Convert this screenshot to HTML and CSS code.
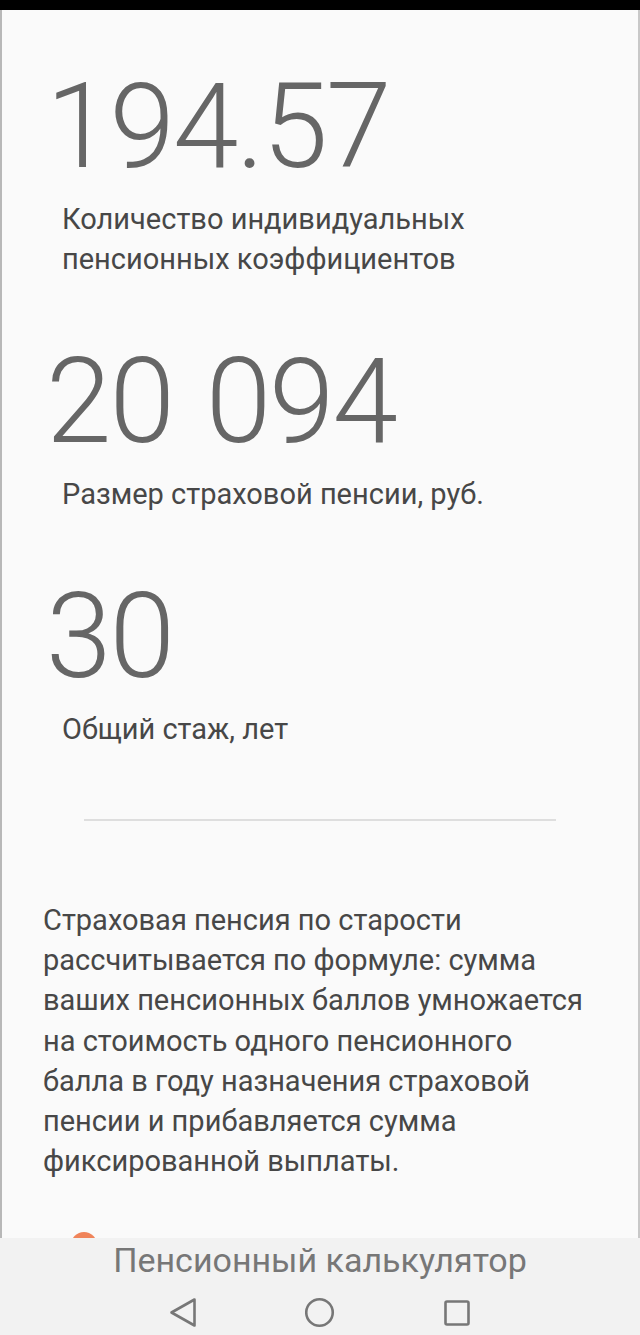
FILE: index.html
```html
<!DOCTYPE html>
<html lang="ru">
<head>
<meta charset="utf-8">
<link rel="stylesheet" href="styles.css">
</head>
<body>
<div class="screen">
  <div class="statusbar"></div>
  <main class="content">
    <section class="stat">
      <div class="stat-value">194.57</div>
      <div class="stat-label">Количество индивидуальных<br>пенсионных коэффициентов</div>
    </section>
    <section class="stat">
      <div class="stat-value">20 094</div>
      <div class="stat-label">Размер страховой пенсии, руб.</div>
    </section>
    <section class="stat">
      <div class="stat-value">30</div>
      <div class="stat-label">Общий стаж, лет</div>
    </section>
    <hr class="divider">
    <p class="note">Страховая пенсия по старости<br>рассчитывается по формуле: сумма<br>ваших пенсионных баллов умножается<br>на стоимость одного пенсионного<br>балла в году назначения страховой<br>пенсии и прибавляется сумма<br>фиксированной выплаты.</p>
    <div class="dot"></div>
  </main>
  <footer class="bottom">
    <div class="title">Пенсионный калькулятор</div>
    <nav class="navkeys">
      <svg class="key" width="30" height="32" viewBox="0 0 30 32"><path d="M26.5 3.5 L3.5 16.5 L26.5 29.5 Z" fill="none" stroke="#777" stroke-width="2.6" stroke-linejoin="round"/></svg>
      <svg class="key" width="30" height="32" viewBox="0 0 30 32"><circle cx="14.5" cy="16.5" r="13.25" fill="none" stroke="#777" stroke-width="2.6"/></svg>
      <svg class="key" width="30" height="32" viewBox="0 0 30 32"><rect x="3.5" y="5.5" width="23" height="23" rx="1.5" fill="none" stroke="#777" stroke-width="2.6"/></svg>
    </nav>
  </footer>
</div>
</body>
</html>
```

FILE: styles.css
```css
html, body {
  margin: 0;
  padding: 0;
  background: #000;
}
.screen {
  width: 640px;
  height: 1335px;
  display: flex;
  flex-direction: column;
  font-family: Roboto, "Noto Sans", sans-serif;
  overflow: hidden;
}
.statusbar {
  height: 10px;
  background: #000;
  flex: none;
}
.content {
  flex: 1;
  display: flex;
  flex-direction: column;
  background: #fafafa;
  border-left: 2px solid #b8b8b8;
  border-right: 2px solid #c8c8c8;
  overflow: hidden;
  padding-top: 58px;
}
.stat {
  display: flex;
  flex-direction: column;
  flex: none;
}
.stat + .stat {
  margin-top: 64px;
}
.stat-value {
  font-size: 118px;
  line-height: 118px;
  height: 118px;
  color: #666;
  padding-left: 44px;
  letter-spacing: -2px;
  word-spacing: 6px;
  font-weight: 300;
}
.stat-label {
  font-size: 29px;
  line-height: 40px;
  color: #474747;
  padding-left: 60px;
  margin-top: 13px;
}
.divider {
  flex: none;
  border: none;
  height: 2px;
  background: #dedede;
  margin: 70px 82px 0 82px;
}
.note {
  flex: none;
  font-size: 29px;
  line-height: 40.2px;
  color: #474747;
  margin: 79px 0 0 0;
  padding-left: 41px;
}
.dot {
  flex: none;
  width: 26px;
  height: 26px;
  border-radius: 50%;
  background: #f0845a;
  margin: 51px 0 0 69px;
}
.bottom {
  flex: none;
  height: 97px;
  background: #f2f2f2;
  display: flex;
  flex-direction: column;
  align-items: center;
}
.title {
  font-size: 34px;
  line-height: 40px;
  color: #777;
  margin-top: 2px;
}
.navkeys {
  display: flex;
  gap: 107px;
  margin-top: 16px;
}
```
